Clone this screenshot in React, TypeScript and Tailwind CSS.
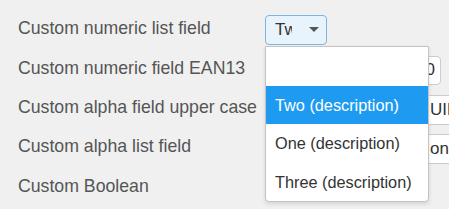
import React from 'react';

const labels = [
	'Custom numeric list field',
	'Custom numeric field EAN13',
	'Custom alpha field upper case',
	'Custom alpha list field',
	'Custom Boolean',
];

const options = ['', 'Two (description)', 'One (description)', 'Three (description)'];

export default function App() {
	return (
		<div
			className="relative h-[209px] w-[449px] overflow-hidden bg-[#f0f0f0] text-[#555]"
			style={{ fontFamily: '"Liberation Sans", Arial, sans-serif' }}
		>
			<div className="flex flex-col pl-[18px] pt-[8px]">
				{/* row 1: select */}
				<div className="flex h-[40px] items-center">
					<div className="w-[247px] shrink-0 whitespace-nowrap text-[17.7px]">{labels[0]}</div>
					<div className="mt-[4px] flex h-[30px] w-[62px] shrink-0 items-center rounded-[4px] border border-[#7fb4de] bg-[#e8f4fc] pl-[9px]">
						<div className="w-[17px] overflow-hidden whitespace-nowrap text-[17px] text-[#333]">Two</div>
						<svg width="12" height="6" viewBox="0 0 12 6" className="ml-[16px]">
							<path d="M1 0 L11 0 L6 5 Z" fill="#555" />
						</svg>
					</div>
				</div>
				{/* row 2: numeric input */}
				<div className="flex h-[40px] items-center">
					<div className="w-[247px] shrink-0 whitespace-nowrap text-[17.7px]">{labels[1]}</div>
					<div className="mt-[4px] flex h-[29px] w-[176px] shrink-0 items-center justify-end rounded-[4px] border border-[#ccc] bg-white pr-[5px] text-[17px] text-[#333]">
						1234567890
					</div>
				</div>
				{/* row 3: upper case */}
				<div className="flex h-[39px] items-center">
					<div className="w-[247px] shrink-0 whitespace-nowrap text-[17.7px]">{labels[2]}</div>
					<div className="mt-[4px] flex h-[30px] w-[240px] shrink-0 items-center whitespace-nowrap border border-[#ccc] bg-white pl-[164px] text-[17px] text-[#333]">
						UIF
					</div>
				</div>
				{/* row 4: alpha list */}
				<div className="flex h-[39px] items-center">
					<div className="w-[247px] shrink-0 whitespace-nowrap text-[17.7px]">{labels[3]}</div>
					<div className="mt-[5px] flex h-[30px] w-[240px] shrink-0 items-center whitespace-nowrap border border-[#ccc] bg-white pl-[164px] text-[17px] text-[#333]">
						on
					</div>
				</div>
				{/* row 5: boolean */}
				<div className="flex h-[40px] items-center">
					<div className="w-[247px] shrink-0 whitespace-nowrap text-[17.7px]">{labels[4]}</div>
				</div>
			</div>

			{/* open dropdown menu */}
			<div className="absolute left-[265px] top-[46px] w-[164px] rounded-b-[4px] border border-[#c4c4c4] bg-white text-[16.3px] text-[#333] shadow-[0_2px_4px_rgba(0,0,0,0.12)]">
				{options.map((o, i) => (
					<div
						key={i}
						className={
							i === 1
								? 'flex h-[38.5px] items-center whitespace-nowrap bg-[#1e9bf0] pl-[9px] text-white'
								: 'flex h-[38.5px] items-center whitespace-nowrap pl-[9px]'
						}
					>
						{o}
					</div>
				))}
			</div>
		</div>
	);
}
